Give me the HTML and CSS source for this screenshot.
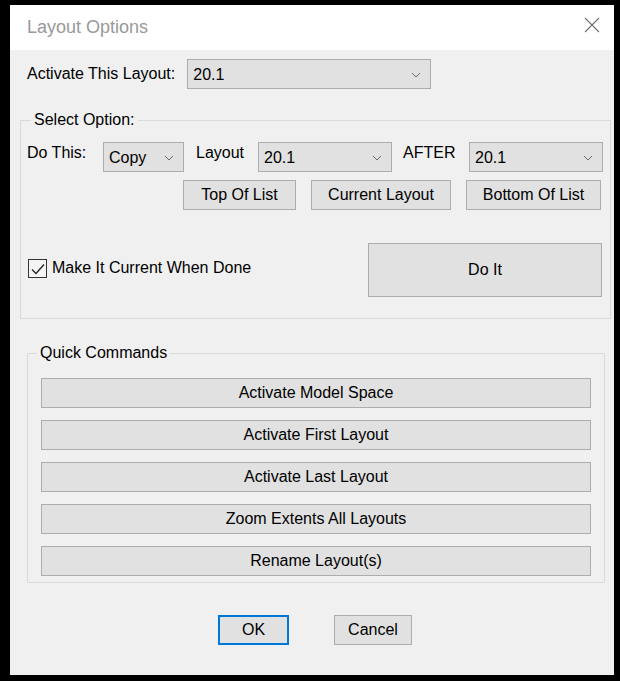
FILE: index.html
```html
<!DOCTYPE html>
<html lang="en">
  <head>
    <meta charset="UTF-8" />
    <meta name="viewport" content="width=device-width, initial-scale=1.0" />
    <title>Layout Options</title>
    <link rel="stylesheet" href="styles.css">
  </head>
  <body>
    <div class="dialog">
      <!-- title bar -->
      <div class="titlebar">
        <span class="title">Layout Options</span>
        <svg class="close" width="16" height="16" viewBox="0 0 16 16">
          <path d="M1 1 L15 15 M15 1 L1 15" stroke="#707070" stroke-width="1.1" fill="none" />
        </svg>
      </div>

      <div class="content">
        <div class="row-activate">
          <span class="label">Activate This Layout:</span>
          <div class="combo combo-activate">
            <span>20.1</span>
            <svg class="chev" width="10" height="6" viewBox="0 0 10 6"><path d="M1 1 L5 5 L9 1" stroke="#6a6a6a" fill="none" /></svg>
          </div>
        </div>

        <!-- Select Option -->
        <fieldset class="group group-select">
          <legend>Select Option:</legend>
          <div class="row-options">
            <span class="label label-do">Do This:</span>
            <div class="combo combo-copy">
              <span>Copy</span>
              <svg class="chev" width="10" height="6" viewBox="0 0 10 6"><path d="M1 1 L5 5 L9 1" stroke="#6a6a6a" fill="none" /></svg>
            </div>
            <span class="label label-layout">Layout</span>
            <div class="combo combo-wide">
              <span>20.1</span>
              <svg class="chev" width="10" height="6" viewBox="0 0 10 6"><path d="M1 1 L5 5 L9 1" stroke="#6a6a6a" fill="none" /></svg>
            </div>
            <span class="label label-after">AFTER</span>
            <div class="combo combo-wide">
              <span>20.1</span>
              <svg class="chev" width="10" height="6" viewBox="0 0 10 6"><path d="M1 1 L5 5 L9 1" stroke="#6a6a6a" fill="none" /></svg>
            </div>
          </div>

          <div class="row-positions">
            <button class="btn btn-top">Top Of List</button>
            <button class="btn btn-current">Current Layout</button>
            <button class="btn btn-bottom">Bottom Of List</button>
          </div>

          <div class="row-do">
            <label class="check">
              <span class="check-box">
                <svg width="17" height="17" viewBox="0 0 17 17"><path d="M3 9.5 L7 13.5 L15 4.5" stroke="#222" stroke-width="1.3" fill="none" /></svg>
              </span>
              <span>Make It Current When Done</span>
            </label>
            <button class="btn btn-doit">Do It</button>
          </div>
        </fieldset>

        <!-- Quick Commands -->
        <fieldset class="group group-quick">
          <legend>Quick Commands</legend>
          <div class="quick-list">
            <button class="btn btn-quick">Activate Model Space</button>
            <button class="btn btn-quick">Activate First Layout</button>
            <button class="btn btn-quick">Activate Last Layout</button>
            <button class="btn btn-quick">Zoom Extents All Layouts</button>
            <button class="btn btn-quick">Rename Layout(s)</button>
          </div>
        </fieldset>

        <div class="footer">
          <button class="btn btn-ok">OK</button>
          <button class="btn btn-cancel">Cancel</button>
        </div>
      </div>
    </div>
  </body>
</html>
```

FILE: styles.css
```css
* {
  box-sizing: border-box;
}

body {
  margin: 0;
  background: #000;
  font-family: "Liberation Sans", Arial, sans-serif;
  font-size: 16px;
  color: #000;
}

.dialog {
  width: 604px;
  height: 670px;
  margin: 5px 0 0 10px;
  background: #f0f0f0;
}

/* title bar */
.titlebar {
  height: 45px;
  background: #fff;
  display: flex;
  align-items: center;
  justify-content: space-between;
  padding: 0 14px 0 17px;
}

.title {
  font-size: 18px;
  color: #999;
}

.close {
  margin-bottom: 5px;
}

.content {
  padding-top: 9px;
}

.label {
  line-height: 18px;
  white-space: nowrap;
}

/* combo boxes */
.combo {
  height: 30px;
  display: flex;
  align-items: center;
  justify-content: space-between;
  padding: 1px 9px 0 5px;
  background: #e1e1e1;
  border: 1px solid #adadad;
  line-height: 18px;
}

.row-activate {
  display: flex;
  align-items: center;
  padding-left: 17px;
}

.combo-activate {
  width: 244px;
  margin-left: 12px;
}

/* group boxes */
.group {
  margin: 0;
  padding: 0;
  border: 1px solid #dadada;
}

.group legend {
  padding: 0 3px;
  line-height: 18px;
}

.group-select {
  width: 591px;
  margin: 22px 0 0 10px;
  padding: 13px 7px 21px 6px;
}

.group-select legend {
  margin-left: 4px;
}

.row-options {
  display: flex;
  align-items: flex-start;
}

.row-options .label {
  margin-top: 2px;
}

.label-do {
  width: 76px;
}

.combo-copy {
  width: 81px;
}

.label-layout {
  width: 62px;
  margin-left: 12px;
}

.label-after {
  width: 66px;
  margin-left: 11px;
}

.combo-wide {
  width: 134px;
}

/* buttons */
.btn {
  height: 30px;
  padding: 0;
  background: #e1e1e1;
  border: 1px solid #adadad;
  font-family: inherit;
  font-size: 16px;
  color: #000;
}

.row-positions {
  display: flex;
  gap: 15px;
  margin: 8px 0 0 156px;
}

.btn-top {
  width: 113px;
}

.btn-current {
  width: 140px;
}

.btn-bottom {
  width: 135px;
}

.row-do {
  display: flex;
  align-items: center;
  margin-top: 33px;
}

.check {
  display: flex;
  align-items: center;
  gap: 5px;
  margin: 0 0 4px 1px;
}

.check-box {
  width: 19px;
  height: 19px;
  border: 1px solid #333;
  background: #f4f4f4;
}

.check-box svg {
  display: block;
}

.btn-doit {
  width: 234px;
  height: 54px;
  margin: 0 1px 0 auto;
}

.group-quick {
  width: 578px;
  margin: 25px 0 0 17px;
  padding: 16px 13px 6px 13px;
}

.group-quick legend {
  margin-left: -4px;
}

.quick-list {
  display: flex;
  flex-direction: column;
  gap: 12px;
}

.btn-quick {
  width: 100%;
}

/* OK / Cancel */
.footer {
  display: flex;
  gap: 45px;
  margin: 32px 0 0 208px;
}

.btn-ok {
  width: 71px;
  border: 2px solid #0078d7;
}

.btn-cancel {
  width: 78px;
}
```
